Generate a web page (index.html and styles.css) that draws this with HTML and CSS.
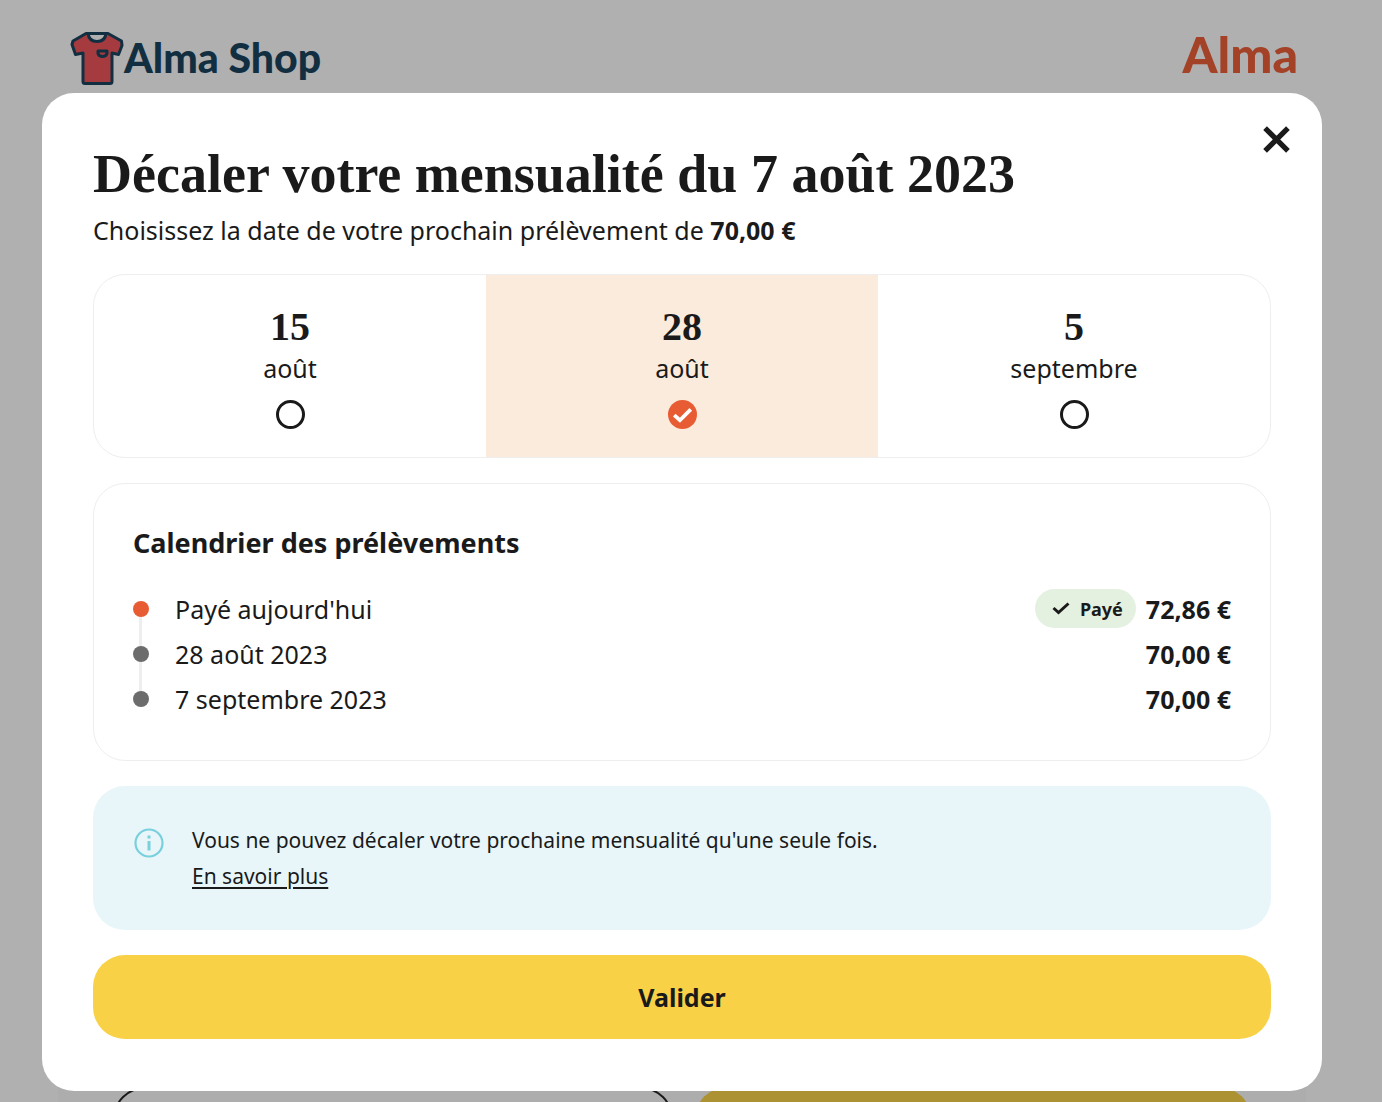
FILE: index.html
```html
<!DOCTYPE html>
<html lang="fr">
<head>
<meta charset="utf-8">
<meta name="viewport" content="width=device-width, initial-scale=1">
<title>Décaler votre mensualité</title>
<link rel="stylesheet" href="styles.css">
</head>
<body>
<div class="page">
  <header class="topbar">
    <div class="shop">
      <svg class="shop-icon" viewBox="0 0 54 54" aria-hidden="true">
        <path d="M16 2H38L51.500 9.500L52 14L48.500 23L42 21.500V50Q42 52 40 52H15Q13 52 13 50V21.500L5.500 23L2 13L3 9.500Z" fill="#a53b3e" stroke="#122f42" stroke-width="3" stroke-linejoin="round"/>
        <path d="M18 2Q19 10 27 10T36 2Z" fill="#b0b0b0" stroke="#122f42" stroke-width="3" stroke-linejoin="round"/>
        <path d="M28 19.500H37V22Q36 25 32.500 25T28 22Z" fill="#a53b3e" stroke="#122f42" stroke-width="3" stroke-linejoin="round"/>
      </svg>
      <span class="shop-name">Alma Shop</span>
    </div>
    <span class="brand">Alma</span>
  </header>
  <div class="sheet">
    <span class="sheet-action sheet-outline"></span>
    <span class="sheet-action sheet-filled"></span>
  </div>
</div>

<div class="overlay">
  <form class="modal" role="dialog" aria-modal="true" aria-labelledby="modal-title">
    <button class="close" type="button" aria-label="Fermer">
      <svg viewBox="0 0 26 26" aria-hidden="true"><path d="M2 2L24 24M24 2L2 24" stroke="#1a1a1a" stroke-width="5"/></svg>
    </button>
    <div class="heading">
      <h1 id="modal-title">Décaler votre mensualité du 7 août 2023</h1>
      <p>Choisissez la date de votre prochain prélèvement de <strong>70,00 €</strong></p>
    </div>

    <div class="options">
      <label class="option">
        <span class="day">15</span>
        <span>août</span>
        <input type="radio" name="date" value="2023-08-15">
      </label>
      <label class="option">
        <span class="day">28</span>
        <span>août</span>
        <span class="radio">
          <input type="radio" name="date" value="2023-08-28" checked>
          <svg class="tick" viewBox="0 0 28 28" aria-hidden="true"><path d="M6 14.500L11.500 19.500L22 9" fill="none" stroke="#fff" stroke-width="3.600"/></svg>
        </span>
      </label>
      <label class="option">
        <span class="day">5</span>
        <span>septembre</span>
        <input type="radio" name="date" value="2023-09-05">
      </label>
    </div>

    <section class="calendar">
      <h2>Calendrier des prélèvements</h2>
      <ul class="payments">
        <li class="paid">
          <span>Payé aujourd'hui</span>
          <span class="badge"><svg viewBox="0 0 18 14" aria-hidden="true"><path d="M1.500 6L6.500 10.500L16.500 1.500" fill="none" stroke="#1a1a1a" stroke-width="3"/></svg>Payé</span>
          <strong>72,86 €</strong>
        </li>
        <li><span>28 août 2023</span><strong>70,00 €</strong></li>
        <li><span>7 septembre 2023</span><strong>70,00 €</strong></li>
      </ul>
    </section>

    <div class="notice">
      <svg viewBox="0 0 30 30" aria-hidden="true">
        <circle cx="15" cy="15" r="13.500" fill="none" stroke="#79d0dd" stroke-width="2.200"/>
        <path d="M13.500 7.500H16.500V10.500H13.500ZM13.500 13H16.500V22.500H13.500Z" fill="#79d0dd"/>
      </svg>
      <p>Vous ne pouvez décaler votre prochaine mensualité qu'une seule fois.<br><a href="#">En savoir plus</a></p>
    </div>

    <button class="submit" type="submit">Valider</button>
  </form>
</div>
</body>
</html>
```
FILE: styles.css
```css
*, *::before, *::after { box-sizing: border-box; }

body {
  margin: 0;
  background: #b0b0b0;
  color: #1a1a1a;
  font: 25px/32px "Noto Sans", sans-serif;
}

h1, h2, p, ul { margin: 0; padding: 0; }

.page {
  display: flex;
  flex-direction: column;
  height: 100vh;
  overflow: hidden;
}

.topbar {
  display: flex;
  align-items: flex-start;
  justify-content: space-between;
  padding: 30px 84px 8px 70px;
}

.shop { display: flex; align-items: center; }
.shop-icon { width: 54px; height: 55px; }

.shop-name {
  color: #122f42;
  font: 900 41px/56px Lato, sans-serif;
}

.brand {
  color: #a34227;
  font: 900 50px/48px Lato, sans-serif;
}

.sheet {
  display: flex;
  flex: 1;
  align-items: flex-end;
  gap: 22px;
  margin: 0 76px 0 58px;
  padding: 0 55px;
  background: linear-gradient(#b0b0b0 80%, #adadad 80%);
}

.sheet-action {
  flex: 1;
  height: 84px;
  margin-bottom: -69px;
  border-radius: 32px;
}
.sheet-outline { border: 2px solid #1a1a1a; }
.sheet-filled { background: #ac9232; }

.overlay {
  position: absolute;
  inset: 0 0 auto;
  padding: 93px 60px 11px 42px;
}

.modal {
  position: relative;
  display: flex;
  flex-direction: column;
  gap: 25px;
  padding: 52px 51px;
  border-radius: 32px;
  background: #fff;
}

.close {
  position: absolute;
  top: 26px;
  right: 25px;
  display: flex;
  padding: 7px;
  border: 0;
  background: none;
}
.close svg { width: 27px; height: 27px; }

h1 { font: bold 54px/58px "Liberation Serif", serif; }
.heading p { margin-top: 9px; padding-bottom: 2px; line-height: 36px; }

.heading { padding: 0; }

.options {
  display: grid;
  grid-template-columns: repeat(3, 1fr);
  margin-top: -1px;
  overflow: hidden;
  border: 1px solid #eee;
  border-radius: 32px;
}

.option {
  display: flex;
  flex-direction: column;
  align-items: center;
  padding: 32px 16px 28px;
}
.option:has(:checked) { background: #faebdc; }

.day {
  margin-bottom: 5px;
  font: bold 40px/40px "Liberation Serif", serif;
}

.option input {
  display: block;
  width: 29px;
  height: 29px;
  margin: 16px 0 0;
  border: 3px solid #1a1a1a;
  border-radius: 50%;
  appearance: none;
}
.option input:checked { border: 0; background: #e85c33; }

.radio { position: relative; }
.tick {
  position: absolute;
  bottom: 0;
  left: 0;
  width: 29px;
  height: 29px;
}

.calendar {
  padding: 41px 39px 39px;
  border: 1px solid #eee;
  border-radius: 32px;
}

h2 {
  margin-bottom: 25px;
  font-size: 27px;
  line-height: 36px;
}

.payments { list-style: none; }
.payments li {
  position: relative;
  display: flex;
  align-items: center;
  gap: 10px;
  height: 45px;
}
.payments li::before {
  z-index: 1;
  width: 16px;
  height: 16px;
  margin-right: 16px;
  border-radius: 50%;
  background: #6c6c6c;
  content: "";
}
.payments .paid::before { background: #e85c33; }
.payments li + li::after {
  position: absolute;
  top: -22px;
  left: 6px;
  width: 3px;
  height: 45px;
  background: #eee;
  content: "";
}
.payments strong { margin-left: auto; }
.payments .badge + strong { margin-left: 0; }

.badge {
  display: flex;
  align-items: center;
  gap: 10px;
  height: 39px;
  margin-left: auto;
  padding: 0 13px 0 17px;
  border-radius: 20px;
  background: #e4f1e1;
  font-size: 18px;
  font-weight: bold;
}
.badge svg { width: 18px; height: 14px; }

.notice {
  display: flex;
  gap: 28px;
  padding: 36px 41px;
  border-radius: 32px;
  background: #e8f6fa;
  font-size: 21px;
  line-height: 36px;
}
.notice svg { flex: none; width: 30px; height: 30px; margin-top: 6px; }
.notice a {
  color: inherit;
  text-decoration-thickness: 2px;
  text-underline-offset: 3px;
}

.submit {
  height: 84px;
  border: 0;
  border-radius: 32px;
  background: #f8d147;
  color: inherit;
  font: bold 25px/32px "Noto Sans", sans-serif;
}
```
